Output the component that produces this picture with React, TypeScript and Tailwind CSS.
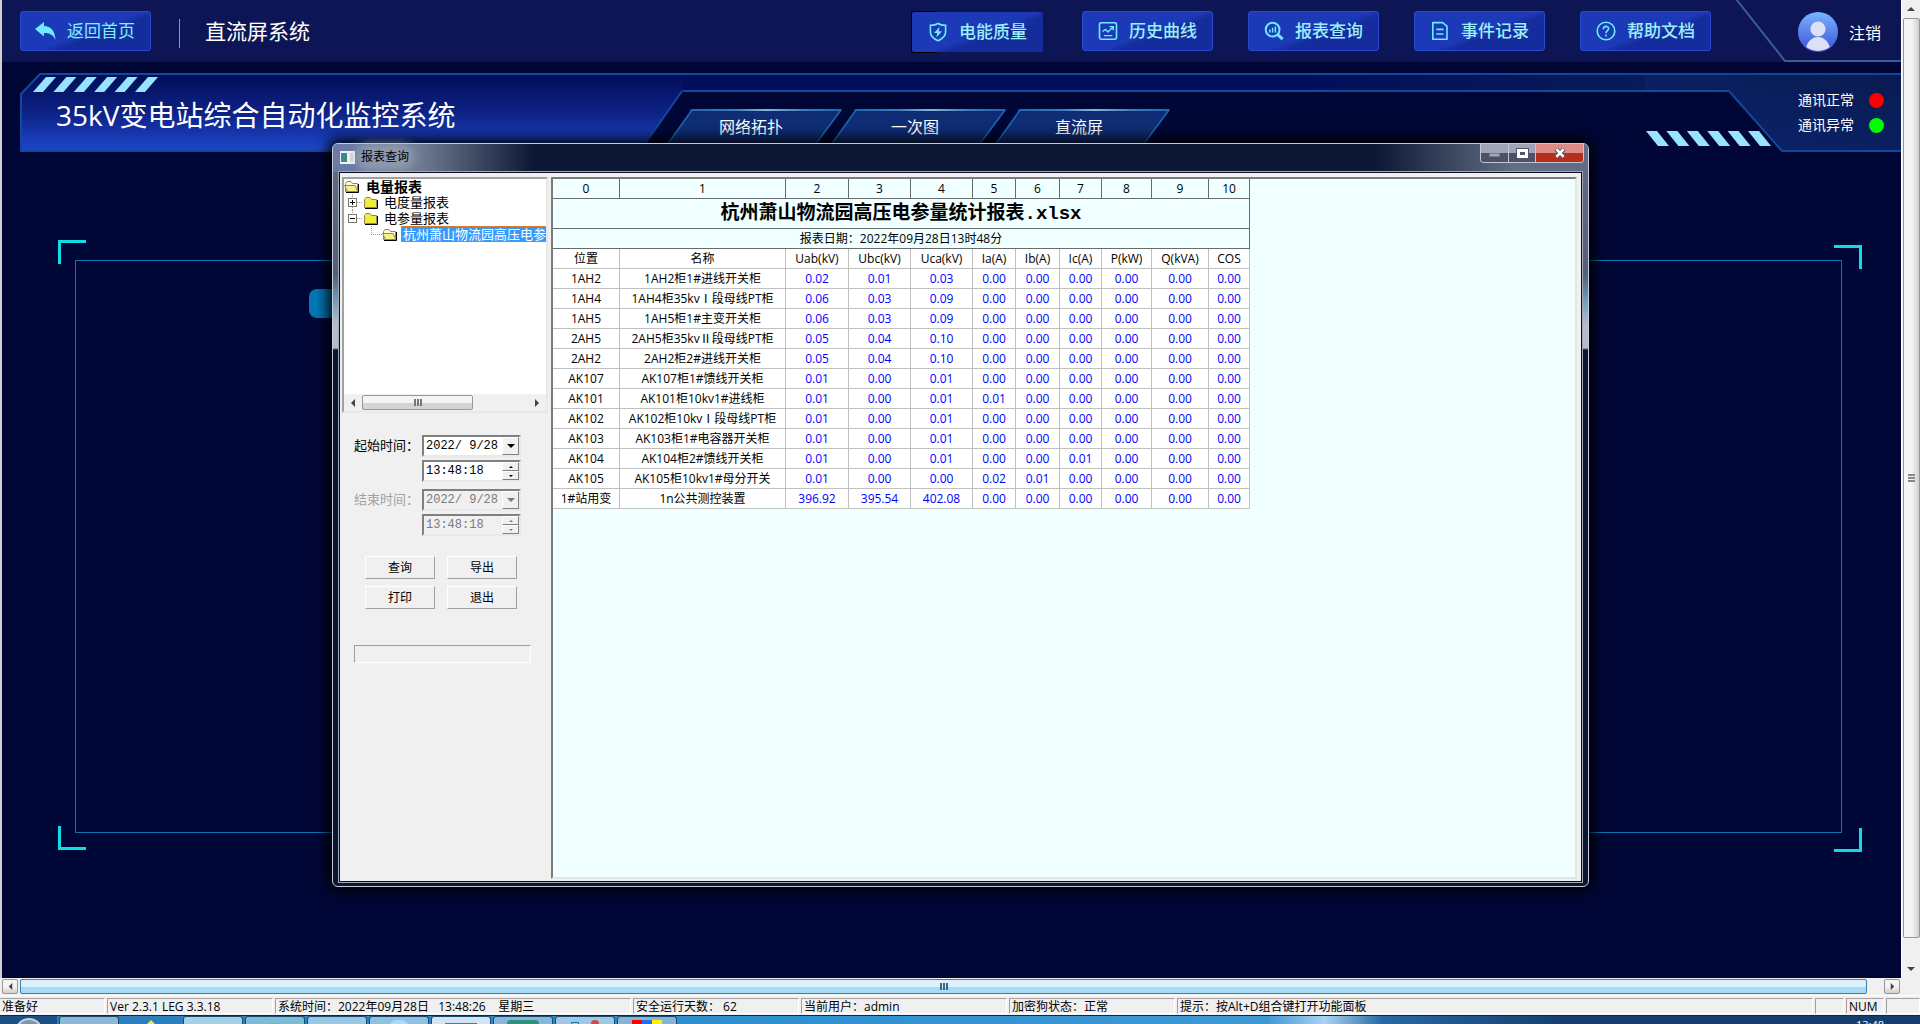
import React from "react";

type IconName = "shield" | "chart" | "search" | "doc" | "help";

const NAV: { label: string; icon: IconName; active?: boolean }[] = [
  { label: "电能质量", icon: "shield", active: true },
  { label: "历史曲线", icon: "chart" },
  { label: "报表查询", icon: "search" },
  { label: "事件记录", icon: "doc" },
  { label: "帮助文档", icon: "help" },
];

const COLUMNS = [
  { width: 67, title: "位置" },
  { width: 166, title: "名称" },
  { width: 63, title: "Uab(kV)" },
  { width: 62, title: "Ubc(kV)" },
  { width: 62, title: "Uca(kV)" },
  { width: 43, title: "Ia(A)" },
  { width: 44, title: "Ib(A)" },
  { width: 42, title: "Ic(A)" },
  { width: 50, title: "P(kW)" },
  { width: 57, title: "Q(kVA)" },
  { width: 41, title: "COS" },
];

const ROWS: string[][] = [
  ["1AH2", "1AH2柜1#进线开关柜", "0.02", "0.01", "0.03", "0.00", "0.00", "0.00", "0.00", "0.00", "0.00"],
  ["1AH4", "1AH4柜35kvⅠ段母线PT柜", "0.06", "0.03", "0.09", "0.00", "0.00", "0.00", "0.00", "0.00", "0.00"],
  ["1AH5", "1AH5柜1#主变开关柜", "0.06", "0.03", "0.09", "0.00", "0.00", "0.00", "0.00", "0.00", "0.00"],
  ["2AH5", "2AH5柜35kvⅡ段母线PT柜", "0.05", "0.04", "0.10", "0.00", "0.00", "0.00", "0.00", "0.00", "0.00"],
  ["2AH2", "2AH2柜2#进线开关柜", "0.05", "0.04", "0.10", "0.00", "0.00", "0.00", "0.00", "0.00", "0.00"],
  ["AK107", "AK107柜1#馈线开关柜", "0.01", "0.00", "0.01", "0.00", "0.00", "0.00", "0.00", "0.00", "0.00"],
  ["AK101", "AK101柜10kv1#进线柜", "0.01", "0.00", "0.01", "0.01", "0.00", "0.00", "0.00", "0.00", "0.00"],
  ["AK102", "AK102柜10kvⅠ段母线PT柜", "0.01", "0.00", "0.01", "0.00", "0.00", "0.00", "0.00", "0.00", "0.00"],
  ["AK103", "AK103柜1#电容器开关柜", "0.01", "0.00", "0.01", "0.00", "0.00", "0.00", "0.00", "0.00", "0.00"],
  ["AK104", "AK104柜2#馈线开关柜", "0.01", "0.00", "0.01", "0.00", "0.00", "0.01", "0.00", "0.00", "0.00"],
  ["AK105", "AK105柜10kv1#母分开关", "0.01", "0.00", "0.00", "0.02", "0.01", "0.00", "0.00", "0.00", "0.00"],
  ["1#站用变", "1n公共测控装置", "396.92", "395.54", "402.08", "0.00", "0.00", "0.00", "0.00", "0.00", "0.00"],
];

function NavIcon({ name }: { name: IconName }) {
  const common = {
    viewBox: "0 0 20 20",
    fill: "none",
    stroke: "#6feaf8",
    strokeWidth: 1.6,
    className: "size-5 shrink-0",
    "aria-hidden": true,
  } as const;
  switch (name) {
    case "shield":
      return (
        <svg {...common}>
          <path d="M10 1.5 C12 3 15 3.4 17.6 3.4 V10 C17.6 14.5 14 17 10 18.7 C6 17 2.4 14.5 2.4 10 V3.4 C5 3.4 8 3 10 1.5Z" />
          <path d="M11.6 4.8 L6 11 H9.2 L8.4 15.4 L14 9.2 H10.7Z" fill="#6feaf8" stroke="none" />
        </svg>
      );
    case "chart":
      return (
        <svg {...common}>
          <rect x="1.5" y="1.8" width="17" height="16.4" rx="1.6" />
          <path d="M4.5 10.5 L7.5 8.5 L10 11 L15 6 M11.6 5.6 H15.3 V9.2 M6 14.6 H14.2" strokeWidth="1.4" />
        </svg>
      );
    case "search":
      return (
        <svg {...common}>
          <circle cx="8.6" cy="8.6" r="6.9" strokeWidth="2" />
          <path d="M13.7 13.7 L18.6 18.2" strokeWidth="3" />
          <path d="M5.8 11.5 V8.6 M8.6 11.5 V6.8 M11.4 11.5 V5.4" strokeWidth="1.5" />
        </svg>
      );
    case "doc":
      return (
        <svg {...common}>
          <path d="M2.8 1.6 H12.6 L17 5.2 V18.3 H2.8Z" strokeLinejoin="round" />
          <path d="M6.3 8.4 H13.5 M6.3 13 H13.5" />
        </svg>
      );
    default:
      return (
        <svg {...common}>
          <circle cx="10" cy="10" r="8.8" />
          <path d="M7.4 8.2 C7.4 4.4 12.7 4.6 12.6 7.8 C12.5 9.8 10 9.6 10 12.2" />
          <path d="M10 13.6 V15.4" />
        </svg>
      );
  }
}

function Header() {
  return (
    <header className="flex h-[62px] shrink-0 bg-[#0d1554]">
      <div className="flex flex-1 items-start pt-[11px] pl-[18px]">
        <button className="flex h-10 w-[131px] items-center gap-[11px] rounded-[3px] border border-[#2a4bd0] bg-linear-160 from-[#1c3ab8] from-52% to-[#152c9c] to-60% pl-[14px] text-[17px] leading-6 text-[#7df0f8]">
          <svg viewBox="0 0 21 18" className="h-[18px] w-[21px]" fill="#6feaff" aria-hidden>
            <path d="M0 7 L9 0 V4 C16 4 20 9 20.5 18 C18 12.5 14.5 11 9 11 V14.5Z" />
          </svg>
          返回首页
        </button>
        <div className="mt-2 ml-7 h-[29px] w-px bg-[#19c8e0]" />
        <h1 className="ml-[25px] pt-[5px] text-[21px] leading-[30px] text-white">直流屏系统</h1>
      </div>
      <nav className="flex items-start gap-[35px] pt-[11px]">
        {NAV.map((n) => (
          <button
            key={n.label}
            className={
              n.active
                ? "relative mt-px mr-1 flex h-10 w-[131px] items-center gap-[11px] rounded-[3px] bg-linear-160 from-[#1c3ab8] from-52% to-[#152c9c] to-60% pl-4 text-[17px] leading-6 font-medium text-[#9ceffa]"
                : "flex h-10 w-[131px] items-center gap-[11px] rounded-[3px] border border-[#2a4bd0] bg-linear-160 from-[#1c3ab8] from-52% to-[#152c9c] to-60% pl-[15px] text-[17px] leading-6 font-medium text-[#9ceffa]"
            }
          >
            {n.active && (
              <span className="absolute -top-px -left-px h-[42px] w-[26px] border-y border-l border-black" />
            )}
            <NavIcon name={n.icon} />
            {n.label}
          </button>
        ))}
      </nav>
      <div className="ml-[25px] flex">
        <svg viewBox="0 0 62 62" className="h-[62px] w-[62px]" fill="none" stroke="#3a5c98" strokeWidth="2" aria-hidden>
          <path d="M0 -1 L49 61 H62" />
        </svg>
        <div className="flex w-[103px] items-center gap-[11px] border-b-2 border-[#3a5c98]">
          <svg viewBox="0 0 40 40" className="mt-1 size-10" aria-hidden>
            <defs>
              <linearGradient id="avatar" x1="0" y1="0" x2="0" y2="1">
                <stop offset="0" stopColor="#7ab4ff" />
                <stop offset="1" stopColor="#3a50d8" />
              </linearGradient>
              <clipPath id="avatarClip">
                <circle cx="20" cy="20" r="19" />
              </clipPath>
            </defs>
            <circle cx="20" cy="20" r="20" fill="url(#avatar)" />
            <g clipPath="url(#avatarClip)" fill="#dbe2f6">
              <circle cx="20" cy="17" r="7.6" />
              <path d="M7.5 37 C10 28 15 25 20 25 C25 25 30 28 32.5 37 C25 40 15 40 7.5 37Z" />
            </g>
          </svg>
          <a href="#logout" className="pt-1.5 text-[16px] leading-5 text-white">
            注销
          </a>
        </div>
      </div>
    </header>
  );
}

function Tab({ label, className }: { label: string; className?: string }) {
  return (
    <button className={"relative h-[36px] w-[176px] pr-1.5 text-[16px] leading-9 text-white " + (className ?? "")}>
      <svg viewBox="0 0 176 36" className="absolute inset-0 h-full w-full" aria-hidden>
        <defs>
          <linearGradient id="tabTop">
            <stop offset="0" stopColor="#1d66b0" />
            <stop offset="0.3" stopColor="#3a7cc0" />
            <stop offset="0.5" stopColor="#8ab4dc" />
            <stop offset="0.75" stopColor="#3a7cc0" />
            <stop offset="1" stopColor="#1d66b0" />
          </linearGradient>
        </defs>
        <path d="M26 1 H175 L149 36 H1Z" fill="#0f2d74" />
        <path d="M26 1 L1 36 M175 1 L149 36" stroke="#1d66b0" strokeWidth="1.6" />
        <path d="M25 0 H176 L175 2 H24Z" fill="url(#tabTop)" />
      </svg>
      <span className="relative">{label}</span>
    </button>
  );
}

function Banner() {
  return (
    <section className="relative mt-[11px] ml-[18px] h-[79px] shrink-0">
      <div className="absolute inset-0 flex">
        <svg viewBox="0 0 663 79" className="h-[79px] w-[663px]" aria-hidden>
          <defs>
            <linearGradient id="bannerFill" x1="0" y1="0" x2="0" y2="1">
              <stop offset="0.05" stopColor="#020f5c" />
              <stop offset="0.5" stopColor="#0d2285" />
              <stop offset="1" stopColor="#1d47cc" />
            </linearGradient>
          </defs>
          <path d="M1 21 L20 1 H663 V18 L620 78 H1Z" fill="url(#bannerFill)" />
          <path d="M663 1 H20 L1 21 V78 H620 L662 18" fill="none" stroke="#11499a" strokeWidth="2" />
          {[0, 1, 2, 3, 4, 5].map((i) => (
            <path key={i} d={`M${13 + i * 20.4} 19 h10 l13 -15 h-10z`} fill="#98e4ff" />
          ))}
        </svg>
        <div className="h-[19px] flex-1 border-y-2 border-[#11499a] bg-linear-to-r from-[#020e5a] from-65% to-[#081b58]" />
        <svg viewBox="0 0 256 79" className="h-[79px] w-[256px]" aria-hidden>
          <defs>
            <linearGradient id="rightFill" x1="0" y1="1" x2="1" y2="0">
              <stop offset="0" stopColor="#0c2470" />
              <stop offset="1" stopColor="#081b50" />
            </linearGradient>
          </defs>
          <path d="M0 1 H256 V78 H137 L84 18 H0Z" fill="url(#rightFill)" />
          <path d="M0 1 H256 M0 18 H84 L137 78 H256" fill="none" stroke="#11499a" strokeWidth="2" />
          {[0, 1, 2, 3, 4, 5].map((i) => (
            <path key={i} d={`M${1 + i * 20.4} 58 h11 l12 15 h-11z`} fill="#98e4ff" />
          ))}
        </svg>
      </div>
      <div className="relative flex items-start">
        <h2 className="w-[646px] pt-[22px] pl-9 text-[28px] leading-10 text-white">35kV变电站综合自动化监控系统</h2>
        <div className="flex pt-9">
          <Tab label="网络拓扑" />
          <Tab label="一次图" className="-ml-3" />
          <Tab label="直流屏" className="-ml-3" />
        </div>
        <div className="ml-auto flex flex-col gap-[5px] pt-[17px] pr-[17px] text-[14px] leading-5 text-white">
          <div className="flex items-center gap-[15px]">
            通讯正常
            <span className="size-[15px] rounded-full bg-[#ff0000]" />
          </div>
          <div className="flex items-center gap-[15px]">
            通讯异常
            <span className="size-[15px] rounded-full bg-[#00ff00]" />
          </div>
        </div>
      </div>
    </section>
  );
}

function Stage() {
  return (
    <div className="relative mt-[88px] mr-[39px] mb-[126px] ml-[56px] flex-1">
      <span className="absolute top-0 left-0 h-6 w-7 border-t-[3px] border-l-[3px] border-[#10dce8]" />
      <span className="absolute top-[5px] right-0 h-6 w-7 border-t-[3px] border-r-[3px] border-[#10dce8]" />
      <span className="absolute bottom-0.5 left-0 h-6 w-7 border-b-[3px] border-l-[3px] border-[#10dce8]" />
      <span className="absolute right-0 bottom-0 h-6 w-7 border-r-[3px] border-b-[3px] border-[#10dce8]" />
      <div className="absolute top-5 right-5 bottom-[19px] left-[17px] border border-[#0a76b0]">
        <div className="mt-7 ml-[233px] h-[29px] w-[120px] rounded-[8px] bg-[#0078b4]" />
      </div>
    </div>
  );
}

function FolderIcon({ open }: { open?: boolean }) {
  return (
    <svg viewBox="0 0 16 13" className="h-[13px] w-4 shrink-0" aria-hidden>
      <path d="M1.5 11.5 V3.5 L3 1.5 H7 L8.5 3.5 H13.5 V11.5Z" fill={open ? "#fffbd0" : "#f2ec3c"} stroke="#8a8a60" />
      {open && <path d="M0.5 5.5 H11 L14 11.5 H3.5Z" fill="#f6f08a" stroke="#8a8a60" />}
      <path d="M2 12.5 H14.5 V4" fill="none" stroke="#000" />
    </svg>
  );
}

function Expander({ open }: { open?: boolean }) {
  return (
    <svg viewBox="0 0 16 16" className="size-4 shrink-0" fill="none" shapeRendering="crispEdges" aria-hidden>
      <path d="M5.5 0 V4 M10 8.5 H16" stroke="#999" strokeDasharray="1 1" />
      {!open && <path d="M5.5 13 V16" stroke="#999" strokeDasharray="1 1" />}
      <rect x="1.5" y="4.5" width="8" height="8" stroke="#777" fill="#fff" />
      <path d={open ? "M3 8.5 H8" : "M3 8.5 H8 M5.5 6 V11"} stroke="#000" />
    </svg>
  );
}

function Arrow({ dir, className }: { dir: "up" | "down" | "left" | "right"; className?: string }) {
  const d = { up: "M0 6 L4 2 L8 6Z", down: "M0 2 L4 6 L8 2Z", left: "M6 0 L2 4 L6 8Z", right: "M2 0 L6 4 L2 8Z" }[dir];
  return (
    <svg viewBox="0 0 8 8" className={className ?? "size-2"} fill="currentColor" aria-hidden>
      <path d={d} />
    </svg>
  );
}

function Tree() {
  return (
    <div className="flex h-[236px] flex-col border-2 border-t-[#a0a0a0] border-r-[#e8e8e8] border-b-[#e8e8e8] border-l-[#a0a0a0] bg-white text-[13px] leading-4">
      <ul className="flex-1 whitespace-nowrap text-black">
        <li className="flex h-[15px] items-center gap-[6px] text-[14px] leading-[15px] font-bold">
          <FolderIcon open />
          电量报表
        </li>
        <li className="flex h-4 items-center pl-[3px]">
          <Expander />
          <FolderIcon />
          <span className="pl-[5px]">电度量报表</span>
        </li>
        <li className="flex h-4 items-center pl-[3px]">
          <Expander open />
          <FolderIcon />
          <span className="pl-[5px]">电参量报表</span>
        </li>
        <li className="flex h-4 items-center overflow-hidden pl-[27px]">
          <svg viewBox="0 0 11 16" className="h-4 w-[11px] shrink-0" fill="none" shapeRendering="crispEdges" aria-hidden>
            <path d="M0.5 0 V8.5 H11" stroke="#999" strokeDasharray="1 1" />
          </svg>
          <FolderIcon open />
          <span className="ml-[3px] border border-dotted border-[#e08030] bg-[#3399ff] px-px leading-[14px] text-white">
            杭州萧山物流园高压电参量统计报表
          </span>
        </li>
      </ul>
      <div className="flex h-[17px] items-center bg-[#f0f0f0] text-[#444]">
        <button aria-label="向左滚动" className="flex w-[18px] justify-center">
          <Arrow dir="left" />
        </button>
        <div className="flex h-[15px] w-[111px] items-center justify-center gap-px rounded-[2px] border border-[#979797] bg-linear-to-b from-[#f5f5f5] from-50% to-[#d4d4d4] to-50%">
          <span className="h-[7px] w-0.5 bg-[#777]" />
          <span className="h-[7px] w-0.5 bg-[#777]" />
          <span className="h-[7px] w-0.5 bg-[#777]" />
        </div>
        <button aria-label="向右滚动" className="ml-auto flex w-[18px] justify-center">
          <Arrow dir="right" />
        </button>
      </div>
    </div>
  );
}

function DateRange({ id, label, disabled }: { id: string; label: string; disabled?: boolean }) {
  const box = disabled
    ? "flex h-[22px] w-[99px] border-2 border-t-[#808080] border-r-[#e8e8e8] border-b-[#e8e8e8] border-l-[#808080] bg-[#f0f0f0] text-[#7a7a7a]"
    : "flex h-[22px] w-[99px] border-2 border-t-[#808080] border-r-[#e8e8e8] border-b-[#e8e8e8] border-l-[#808080] bg-white text-black";
  const input = "w-0 flex-1 bg-transparent pl-0.5 font-['Liberation_Mono',monospace] text-[12px] leading-4 outline-none";
  const btn = "flex items-center justify-center border border-t-white border-r-[#808080] border-b-[#808080] border-l-white bg-[#f0f0f0]";
  return (
    <div className="flex justify-between">
      <label
        htmlFor={id}
        className={disabled ? "pt-0.5 text-[13px] leading-4 text-[#a0a0a0]" : "pt-0.5 text-[13px] leading-4 text-black"}
      >
        {label}
      </label>
      <div className="flex flex-col gap-[3px]">
        <div className={box}>
          <input id={id} className={input} defaultValue="2022/ 9/28" disabled={disabled} />
          <button aria-label="选择日期" disabled={disabled} className={btn + " w-[17px]"}>
            <Arrow dir="down" />
          </button>
        </div>
        <div className={box}>
          <input aria-label={label + "时刻"} className={input} defaultValue="13:48:18" disabled={disabled} />
          <div className="flex w-[17px] flex-col">
            <button aria-label="增加" disabled={disabled} className={btn + " flex-1"}>
              <Arrow dir="up" className="size-1" />
            </button>
            <button aria-label="减少" disabled={disabled} className={btn + " flex-1"}>
              <Arrow dir="down" className="size-1" />
            </button>
          </div>
        </div>
      </div>
    </div>
  );
}

function SidePanel() {
  return (
    <aside className="w-[206px] shrink-0">
      <Tree />
      <form className="px-3 pt-[22px]" onSubmit={(e) => e.preventDefault()}>
        <div className="flex w-[167px] flex-col gap-[7px]">
          <DateRange id="start" label="起始时间：" />
          <DateRange id="end" label="结束时间：" disabled />
        </div>
        <div className="mt-5 grid grid-cols-[70px_70px] gap-x-3 gap-y-[7px] pl-[11px]">
          {["查询", "导出", "打印", "退出"].map((b) => (
            <button
              key={b}
              className="h-[23px] border border-t-white border-r-[#a0a0a0] border-b-[#a0a0a0] border-l-white bg-[#f0f0f0] text-[12px] leading-4 text-black"
            >
              {b}
            </button>
          ))}
        </div>
        <div
          role="progressbar"
          aria-label="进度"
          className="mt-9 h-[18px] w-[177px] border border-t-[#a0a0a0] border-r-white border-b-white border-l-[#a0a0a0]"
        />
      </form>
    </aside>
  );
}

function Report() {
  return (
    <div className="flex-1 border-2 border-t-[#7a7a7a] border-r-[#e4e4e4] border-b-[#e4e4e4] border-l-[#7a7a7a] bg-[#f0ffff]">
      <table className="table-fixed border-separate border-spacing-0 text-center text-[12px] leading-4 text-black">
        <colgroup>
          {COLUMNS.map((c) => (
            <col key={c.title} style={{ width: c.width }} />
          ))}
        </colgroup>
        <thead>
          <tr className="h-5">
            {COLUMNS.map((c, i) => (
              <th key={c.title} className="border-r border-b border-[#6b6b6b] p-0 font-normal">
                {i}
              </th>
            ))}
          </tr>
          <tr className="h-[30px]">
            <th
              colSpan={11}
              className="border-r border-b border-[#6b6b6b] p-0 font-['Liberation_Mono','Noto_Sans_CJK_SC',monospace] text-[19px] leading-6 font-bold"
            >
              杭州萧山物流园高压电参量统计报表.xlsx
            </th>
          </tr>
          <tr className="h-5">
            <th colSpan={11} className="border-r border-b border-[#6b6b6b] p-0 font-normal">
              报表日期：2022年09月28日13时48分
            </th>
          </tr>
          <tr className="h-5 bg-white">
            {COLUMNS.map((c) => (
              <th key={c.title} className="border-r border-b border-[#c0c0c0] p-0 font-normal">
                {c.title}
              </th>
            ))}
          </tr>
        </thead>
        <tbody className="bg-white">
          {ROWS.map((r) => (
            <tr key={r[0]} className="h-5">
              {r.map((v, i) => (
                <td
                  key={i}
                  className={
                    i < 2
                      ? "border-r border-b border-[#c0c0c0] p-0 whitespace-nowrap"
                      : "border-r border-b border-[#c0c0c0] p-0 text-[#0000ff]"
                  }
                >
                  {v}
                </td>
              ))}
            </tr>
          ))}
        </tbody>
      </table>
    </div>
  );
}

function ReportWindow() {
  return (
    <div
      role="dialog"
      aria-label="报表查询"
      className="absolute top-[143px] right-[312px] bottom-[91px] left-[330px] flex flex-col rounded-[6px] border border-[#c4ccd8] bg-[linear-gradient(180deg,#626c84_0,#565e78_130px,#6fa0c0_158px,#b4bccc_180px,#b4bccc_204px,#0b1530_206px)] px-1.5 pb-1 shadow-[0_0_14px_4px_#000]"
    >
      <div className="-mx-1.5 flex h-7 items-start rounded-t-[5px] bg-[linear-gradient(90deg,#6a7aa8_0,#6f7a92_7%,#0c1733_16%,#0c1733_83%,#626c84_94%)] pl-[7px]">
        <div className="mt-[5px] flex items-center gap-1.5">
          <svg viewBox="0 0 15 13" className="h-[13px] w-[15px]" aria-hidden>
            <rect width="15" height="13" fill="#f2f2f2" />
            <rect x="1" y="2" width="6" height="9" fill="#3c8a8c" />
            <rect x="10" y="2" width="3" height="9" fill="#d8d8dc" />
          </svg>
          <span className="rounded-full bg-[#a4acba]/60 text-[12px] leading-4 text-black shadow-[0_0_8px_6px_#a4acba99]">
            报表查询
          </span>
        </div>
        <div className="mr-1 ml-auto flex h-[19px] overflow-hidden rounded-b-[4px] border border-t-0 border-[#c0c6d2]">
          <button
            aria-label="最小化"
            className="flex w-7 items-center justify-center border-r border-[#c0c6d2] bg-linear-to-b from-[#a0a4b4] from-50% to-[#4c5068] to-50%"
          >
            <span className="mt-1 h-1 w-[11px] border border-[#777b8c] bg-[#a4a6b2]" />
          </button>
          <button
            aria-label="最大化"
            className="flex w-[27px] items-center justify-center border-r border-[#c0c6d2] bg-linear-to-b from-[#a0a4b4] from-50% to-[#4c5068] to-50%"
          >
            <span className="h-[9px] w-[11px] border-[3px] border-white bg-[#50546a] outline outline-[#50546a]" />
          </button>
          <button
            aria-label="关闭"
            className="flex w-[47px] items-center justify-center bg-linear-to-b from-[#dc8c84] from-50% to-[#b4301c] to-50%"
          >
            <svg viewBox="0 0 12 10" className="h-[10px] w-3" aria-hidden>
              <path d="M2 1 L10 9 M10 1 L2 9" stroke="#505060" strokeWidth="4.4" />
              <path d="M2.4 1.2 L9.6 8.8 M9.6 1.2 L2.4 8.8" stroke="#fff" strokeWidth="2.6" />
            </svg>
          </button>
        </div>
      </div>
      <div className="flex flex-1 gap-[3px] border border-[#0a1024] bg-[#f0f0f0] pt-1 pr-1 pb-0.5 pl-0.5 outline outline-[#a0a8b8]">
        <SidePanel />
        <Report />
      </div>
    </div>
  );
}

function VerticalScrollbar() {
  return (
    <div className="flex w-[19px] shrink-0 flex-col items-center border-l border-white bg-[#f0f0f0] text-[#444]">
      <button aria-label="向上滚动" className="flex h-[18px] items-center">
        <Arrow dir="up" />
      </button>
      <div className="flex w-[17px] flex-1 flex-col items-center justify-center gap-px rounded-[2px] border border-[#979797] bg-linear-to-r from-[#f5f5f5] from-50% to-[#cfcfd4]">
        <span className="h-0.5 w-[7px] bg-[#888]" />
        <span className="h-0.5 w-[7px] bg-[#888]" />
        <span className="h-0.5 w-[7px] bg-[#888]" />
      </div>
      <button aria-label="向下滚动" className="flex h-10 items-end pb-[5px]">
        <Arrow dir="down" />
      </button>
    </div>
  );
}

function HorizontalScrollbar() {
  const btn = "flex h-[15px] w-4 items-center justify-center rounded-[2px] border border-[#979797] bg-linear-to-b from-[#f4f4f4] from-50% to-[#d0d0d0] text-[#444]";
  return (
    <div className="flex h-[17px] shrink-0 items-center bg-[#f0f0f0] pr-5 pl-0.5">
      <button aria-label="向左滚动" className={btn}>
        <Arrow dir="left" className="size-[7px]" />
      </button>
      <div className="mr-[17px] ml-0.5 flex h-[15px] flex-1 items-center justify-center gap-px rounded-[2px] border border-[#3c7fb1] bg-linear-to-b from-[#dcf1fc] from-50% to-[#a6dbf6] to-50%">
        <span className="h-[7px] w-0.5 bg-[#3a6c94]" />
        <span className="h-[7px] w-0.5 bg-[#3a6c94]" />
        <span className="h-[7px] w-0.5 bg-[#3a6c94]" />
      </div>
      <button aria-label="向右滚动" className={btn}>
        <Arrow dir="right" className="size-[7px]" />
      </button>
    </div>
  );
}

function StatusBar() {
  const cell = "h-4 overflow-hidden border border-t-[#a0a0a0] border-r-white border-b-white border-l-[#a0a0a0] pl-0.5 whitespace-pre";
  return (
    <footer className="flex h-5 shrink-0 items-center gap-0.5 border-t border-white bg-[#f0f0f0] text-[12px] leading-[15px] text-black">
      <div className={cell + " w-[105px] border-l-0"}>准备好</div>
      <div className={cell + " w-[166px]"}>Ver 2.3.1 LEG 3.3.18</div>
      <div className={cell + " w-[356px]"}>{"系统时间：2022年09月28日   13:48:26    星期三"}</div>
      <div className={cell + " w-[166px]"}>安全运行天数： 62</div>
      <div className={cell + " w-[206px]"}>当前用户：admin</div>
      <div className={cell + " w-[166px]"}>加密狗状态：正常</div>
      <div className={cell + " flex-1"}>提示：按Alt+D组合键打开功能面板</div>
      <div className={cell + " w-[29px]"} />
      <div className={cell + " w-[38px]"}>NUM</div>
      <div className={cell + " w-[34px]"} />
    </footer>
  );
}

function Taskbar() {
  const item = "flex h-[9px] w-[60px] justify-center overflow-hidden rounded-t-[3px] border border-b-0 border-[#1c4a70] pt-[3px]";
  return (
    <div className="flex h-[9px] shrink-0 gap-0.5 overflow-hidden border-t border-[#10283c] bg-[linear-gradient(90deg,#2a7cb8_0,#2f90d0_40%,#3f98d4_66%,#a8d4f0_69%,#2868a4_72%,#143c6c_82%)]">
      <div className="flex w-[57px] justify-center bg-[#1c4f84] pt-0.5">
        <span className="h-7 w-7 shrink-0 rounded-full border-2 border-[#c0d0dc] bg-[#7c98ac]" />
      </div>
      <div className={item + " bg-[#8cb8d4]"}>
        <span className="mt-1 -ml-3 h-2 w-4 bg-[#d8a850]" />
      </div>
      <div className={item + " border-transparent"}>
        <svg viewBox="0 0 12 6" className="h-1.5 w-3" aria-hidden>
          <path d="M0 6 L6 0 L12 6Z" fill="#f6e840" />
        </svg>
      </div>
      <div className={item + " bg-[#a4d0e8]"} />
      <div className={item + " bg-[#7cbcd8]"}>
        <span className="mt-[3px] h-2 w-3 bg-[#58d078]" />
      </div>
      <div className={item + " bg-[#98c8e4]"} />
      <div className={item + " bg-[#90c0e0]"}>
        <span className="h-4 w-5 shrink-0 rounded-full bg-[#a8dcfa]" />
      </div>
      <div className={item + " bg-[#d0e4f4]"}>
        <span className="mt-[3px] h-2 w-8 bg-[#3c78c4]" />
      </div>
      <div className={item + " bg-[#88b8d8]"}>
        <span className="h-4 w-8 rounded-t bg-[#30907c]" />
      </div>
      <div className={item + " gap-3 bg-[#a0c8e0]"}>
        <span className="mt-0.5 h-2 w-2 border border-[#1878b0]" />
        <span className="h-2 w-2 rounded-t-full bg-[#d04848]" />
      </div>
      <div className={item + " bg-[#88b4d4]"}>
        <span className="h-2 w-[10px] bg-[#ff0000]" />
        <span className="h-2 w-[10px] bg-[#2070f0]" />
        <span className="h-2 w-[10px] bg-[#fff000]" />
      </div>
      <div className="mr-9 ml-auto overflow-hidden pt-[3px] text-[11px] leading-3 text-white">13:48</div>
    </div>
  );
}

export default function App() {
  return (
    <div className="flex min-h-screen flex-col bg-[#f0f0f0] font-['Open_Sans','Noto_Sans_CJK_SC',sans-serif]">
      <div className="flex flex-1">
        <main className="relative flex flex-1 flex-col border-l-2 border-[#d0d0d0] bg-[#000736]">
          <Header />
          <Banner />
          <Stage />
          <ReportWindow />
        </main>
        <VerticalScrollbar />
      </div>
      <HorizontalScrollbar />
      <StatusBar />
      <Taskbar />
    </div>
  );
}
